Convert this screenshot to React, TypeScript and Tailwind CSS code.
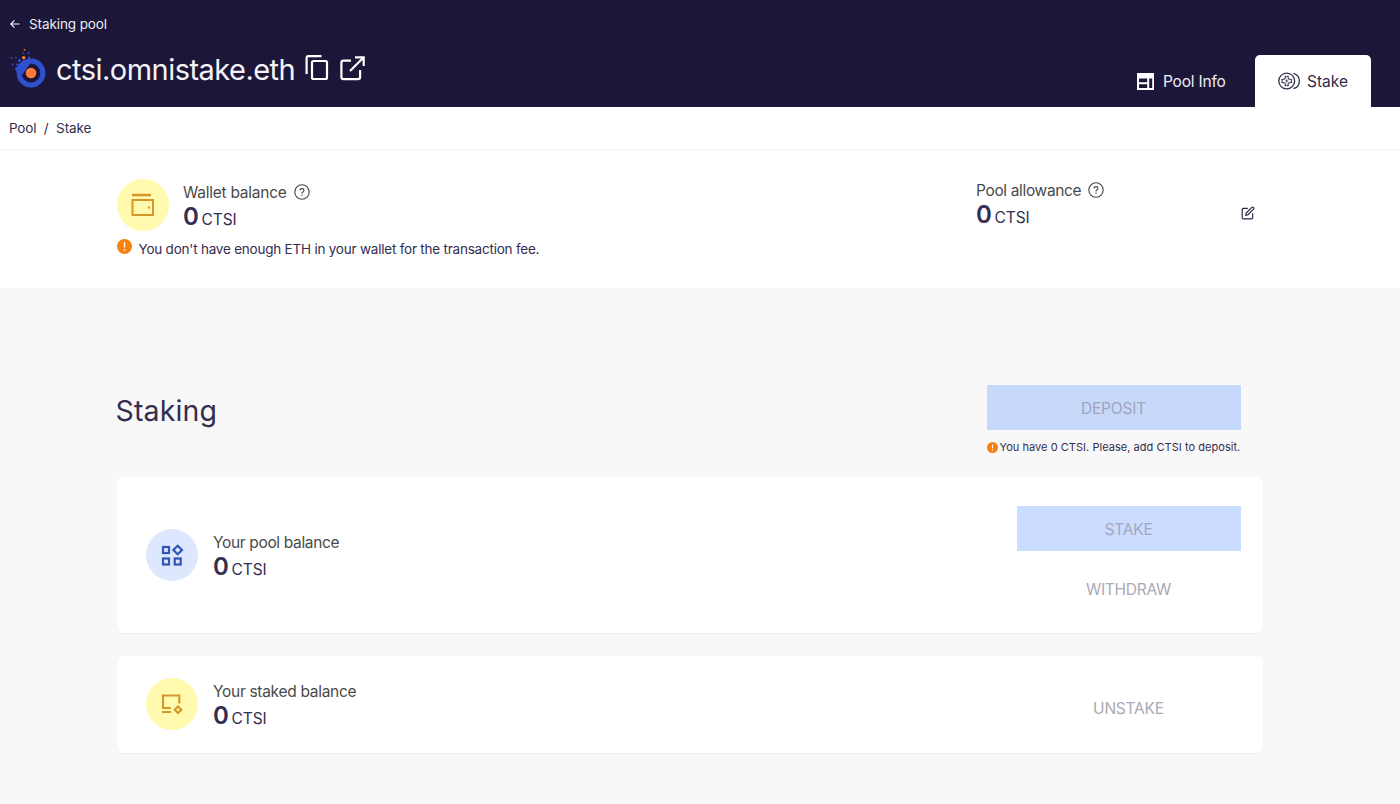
import type { ReactNode } from 'react';

function Planet() {
  return (
    <svg width="37" height="40" viewBox="0 0 37 40" className="shrink-0">
      <path d="M7 22 Q4.500 18.500 8.500 17.500 Q8.500 14 12 14 Q14 9.500 18 11 L24 11 L13 26 Z" fill="#2f50cf" />
      <circle cx="22" cy="24" r="11.900" fill="none" stroke="#2f50cf" strokeWidth="5" />
      <circle cx="22" cy="24" r="5.300" fill="#ff7a33" />
      <circle cx="14.700" cy="8.800" r="1.700" fill="#ff7a33" />
      <circle cx="15.500" cy=".9" r=".8" fill="#ff7a33" />
      <g fill="#3354d8">
        <circle cx="14.500" cy="4.300" r=".8" />
        <circle cx="19.500" cy="4" r="1" />
        <circle cx="2.500" cy="8.800" r=".9" />
        <circle cx="7" cy="8.800" r=".9" />
        <circle cx="3.500" cy="15.500" r=".9" />
        <circle cx="8" cy="15.500" r=".9" />
        <circle cx="10.500" cy="11.500" r="1.500" />
        <circle cx="20" cy="8.800" r="1.200" />
      </g>
    </svg>
  );
}

function Help() {
  return (
    <svg width="16" height="16" viewBox="0 0 16 16" fill="none" stroke="#444" strokeWidth="1.100">
      <circle cx="8" cy="8" r="7.200" />
      <path d="M6 6.500 Q6 4.600 8 4.600 Q10 4.600 10 6.300 Q10 7.300 8.800 8 Q8 8.500 8 9.400" />
      <path d="M8 10.500 V11.800" />
    </svg>
  );
}

function Warning({ size }: { size: number }) {
  return (
    <svg width={size} height={size} viewBox="0 0 16 16" className="shrink-0">
      <circle cx="8" cy="8" r="8" fill="#f8800c" />
      <path d="M8 3.500 V9 M8 10.700 V12.400" stroke="#fff" strokeWidth="1.500" />
    </svg>
  );
}

function Balance({ label, labelClass, help }: { label: string; labelClass: string; help?: boolean }) {
  return (
    <div className="flex flex-col">
      <div className="flex h-6 items-center text-[15.500px] text-[#4a4a4a]">
        <span className={`pt-[2px] ${labelClass}`}>{label}</span>
        {help && (
          <span className="ml-[7px]">
            <Help />
          </span>
        )}
      </div>
      <div className="flex h-[26px] items-baseline whitespace-nowrap leading-[26px] text-[#332e50]">
        <span className="w-[18.500px] text-2xl leading-[26px] font-semibold">0</span>
        <span className="text-[15.500px] leading-[26px] tracking-[-0.1px]">CTSI</span>
      </div>
    </div>
  );
}

function Disc({ children, className }: { children: ReactNode; className: string }) {
  return (
    <div className={`flex size-[52px] shrink-0 items-center justify-center rounded-full ${className}`}>
      {children}
    </div>
  );
}

function Header() {
  return (
    <header className="flex h-[107px] justify-between bg-[#1c1739] pr-[29px] text-white">
      <div className="flex flex-col pl-[9px]">
        <div className="mt-[13px] flex h-[22px] items-center text-[13.500px]">
          <svg width="12" height="12" viewBox="0 0 12 12" fill="none" stroke="#fff" strokeWidth="1.100">
            <path d="M10.500 6 H2 M5.500 2.300 L1.800 6 L5.500 9.700" />
          </svg>
          <span className="ml-2 tracking-[-0.1px] text-[#edecf2]">Staking pool</span>
        </div>
        <div className="mt-[13px] flex h-[42px] items-center">
          <Planet />
          <h1 className="mt-[2px] ml-[10px] w-[249px] text-[29px] leading-9 whitespace-nowrap tracking-[-0.53px] text-[#f4f3f7]">ctsi.omnistake.eth</h1>
          <svg width="62" height="28" viewBox="0 0 62 28" fill="none" stroke="#fff" strokeWidth="2.200" className="-mt-[3px]">
            <path d="M1.600 20 V4 Q1.600 2.100 3.500 2.100 H16.500" />
            <rect x="7" y="7" width="15" height="18" rx="1.500" />
            <path d="M46 6.600 H38.500 Q36.400 6.600 36.400 8.700 V23 Q36.400 25.100 38.500 25.100 H53 Q55.100 25.100 55.100 23 V16" />
            <path d="M45 17 L58 4 M50 3.300 H58.700 V12" />
          </svg>
        </div>
      </div>
      <nav className="flex items-end">
        <a className="flex h-[52px] w-[118px] items-center">
          <svg width="17" height="17" viewBox="0 0 17 17" fill="#fff">
            <path fillRule="evenodd" d="M0 0 H17 V17 H0 Z M2 5.500 V9.300 H10.200 V5.500 Z M2 11.300 V15 H10.200 V11.300 Z M12.200 5.500 V15 H15.200 V5.500 Z" />
          </svg>
          <span className="mt-[2px] ml-[9px] text-[15.500px] tracking-[-0.2px] text-[#edecf2]">Pool Info</span>
        </a>
        <a className="flex h-[52px] w-[116px] items-center rounded-t-[5px] bg-white pl-[22.500px] text-[#302b4a]">
          <svg width="23" height="18" viewBox="0 0 23 18" fill="none" stroke="#302b4a" strokeWidth="1.300">
            <circle cx="8.700" cy="9" r="7.900" />
            <path d="M15.500 1.300 A8 8 0 0 1 15.500 16.700" />
            <path d="M7.200 4 Q8.700 5.300 10.200 4 V7 L13.700 7.500 Q12.500 9 13.700 10.500 L10.200 11 V14 Q8.700 12.700 7.200 14 V11 L3.700 10.500 Q4.900 9 3.700 7.500 L7.200 7 Z" strokeWidth="1" />
            <path d="M8.700 7.500 V10.500 M7.200 9 H10.200" strokeWidth=".8" />
          </svg>
          <span className="mt-[2px] ml-[6.500px] text-[15.500px]">Stake</span>
        </a>
      </nav>
    </header>
  );
}

export default function App() {
  return (
    <div className="flex h-[804px] w-[1400px] flex-col overflow-hidden bg-[#f8f8f8] font-['Inter',sans-serif] font-normal text-[#332e50]">
      <Header />
      <div className="flex h-[43.500px] items-center border-b-2 border-[#f8f8f8] bg-white pt-px pl-[9px] text-[13.500px]">
        <span className="tracking-[-0.2px]">Pool</span>
        <span className="mx-[7.500px]">/</span>
        <span className="tracking-[-0.1px]">Stake</span>
      </div>
      <section className="flex h-[137.500px] justify-between bg-white pt-[28.500px] pr-[145px] pl-[116.500px]">
        <div>
          <div className="flex">
            <Disc className="bg-[#fffaae]">
              <svg width="24" height="24" viewBox="0 0 24 24" fill="none" stroke="#d5962a" strokeWidth="2">
                <path d="M1 2 H20" strokeWidth="2.500" />
                <rect x="1.500" y="7" width="20.500" height="15" />
                <path d="M17 14.500 H19" />
              </svg>
            </Disc>
            <div className="mt-px ml-[14.500px]">
              <Balance label="Wallet balance" labelClass="tracking-[-0.25px]" help />
            </div>
          </div>
          <div className="mt-2 flex h-5 items-start text-[13.500px]">
            <Warning size={15} />
            <span className="ml-[7px] leading-5 whitespace-nowrap tracking-[-0.22px]">
              You don't have enough ETH in your wallet for the transaction fee.
            </span>
          </div>
        </div>
        <div className="-mt-px flex w-[279px] justify-between">
          <Balance label="Pool allowance" labelClass="tracking-[-0.35px]" help />
          <svg width="14" height="14" viewBox="0 0 24 24" fill="none" stroke="#2b2649" strokeWidth="2" strokeLinecap="round" strokeLinejoin="round" className="mt-7">
            <path d="M11 4 H4 A2 2 0 0 0 2 6 V20 A2 2 0 0 0 4 22 H18 A2 2 0 0 0 20 20 V13" />
            <path d="M18.500 2.500 A2.121 2.121 0 0 1 21.500 5.500 L12 15 L8 16 L9 12 Z" />
          </svg>
        </div>
      </section>
      <main className="flex flex-col pt-[97px] pr-[137px] pl-[116.500px]">
        <div className="flex h-[91.500px] justify-between pr-[22.500px]">
          <h2 className="mt-2 -ml-px text-[28.500px] leading-9 tracking-[0.15px]">Staking</h2>
          <div className="w-[254px]">
            <button className="block h-[45px] w-full bg-[#c6d9fa] pt-[2px] text-[15.500px] tracking-[-0.2px] text-[#9fa3bf]">DEPOSIT</button>
            <div className="mt-[9px] flex items-center text-[11px] leading-4">
              <Warning size={11} />
              <span className="ml-[2px] whitespace-nowrap tracking-[0.04px]">You have 0 CTSI. Please, add CTSI to deposit.</span>
            </div>
          </div>
        </div>
        <div className="flex h-[156.500px] items-center justify-between rounded-md bg-white pr-[22.500px] pl-[29.500px] shadow-[0_1px_2px_rgba(0,0,0,0.05)]">
          <div className="flex">
            <Disc className="bg-[#dde7fd]">
              <svg width="24" height="24" viewBox="0 0 24 24" fill="none" stroke="#3155b5" strokeWidth="2.200">
                <rect x="3" y="4" width="6" height="6" />
                <rect x="3" y="15.500" width="6" height="6" />
                <rect x="14.700" y="15.500" width="6" height="6" />
                <path d="M17.700 2.700 L22 7 L17.700 11.300 L13.400 7 Z" />
              </svg>
            </Disc>
            <div className="mt-px ml-[15px]">
              <Balance label="Your pool balance" labelClass="tracking-[-0.34px]" />
            </div>
          </div>
          <div className="mt-2 flex w-56 flex-col gap-[15px]">
            <button className="h-[45px] bg-[#cadcff] pt-[2px] text-[15.500px] tracking-[-0.2px] text-[#a5a6bd]">STAKE</button>
            <button className="h-[45px] pt-px text-[15.500px] tracking-[-0.25px] text-[#aaa9b5]">WITHDRAW</button>
          </div>
        </div>
        <div className="mt-[23px] flex h-[97px] items-center justify-between rounded-md bg-white pr-[22.500px] pl-[29.500px] shadow-[0_1px_2px_rgba(0,0,0,0.05)]">
          <div className="-mt-px flex">
            <Disc className="bg-[#fffaae]">
              <svg width="24" height="24" viewBox="0 0 24 24" fill="none" stroke="#d5962a" strokeWidth="2.100">
                <path d="M11 16 H3 V3.500 H19.300 V11.500 M2 20 H11" />
                <path d="M18 14.500 L21.300 17.800 L18 21.100 L14.700 17.800 Z" />
              </svg>
            </Disc>
            <div className="mt-px ml-[15px]">
              <Balance label="Your staked balance" labelClass="tracking-[-0.3px]" />
            </div>
          </div>
          <button className="mt-[7px] h-[45px] w-56 pt-[2px] text-[15.500px] tracking-[-0.2px] text-[#aaa9b5]">UNSTAKE</button>
        </div>
      </main>
    </div>
  );
}
